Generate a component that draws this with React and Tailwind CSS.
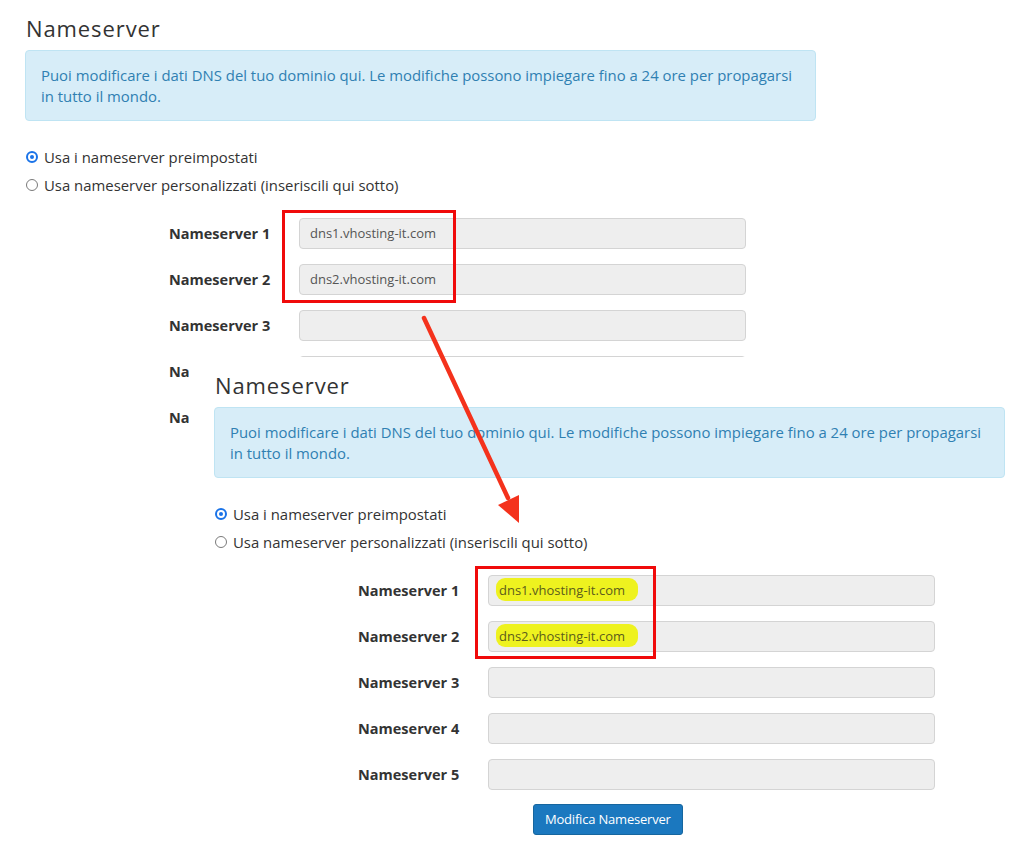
const font = { fontFamily: "'Open Sans', 'Liberation Sans', sans-serif" }

const Radio = ({ checked, children }) => (
    <div className="flex items-center h-[28px] text-[14.9px] text-[#333]">
        {checked ? (
            <span className="w-[12px] h-[12px] rounded-full border-[2px] border-[#1a73e8] flex items-center justify-center ml-[1px]">
                <span className="w-[4px] h-[4px] rounded-full bg-[#1a73e8]"></span>
            </span>
        ) : (
            <span className="w-[12px] h-[12px] rounded-full border border-[#7a7a7a] ml-[1px]"></span>
        )}
        <span className="ml-[6px]">{children}</span>
    </div>
)

const Field = ({ n, value, highlight }) => (
    <div className="flex items-center h-[31px]">
        <label className="ml-[144px] w-[130px] text-[14.5px] font-bold text-[#333]">Nameserver {n}</label>
        <div className="relative w-[447px] h-[31px] rounded-[4px] border border-[#d4d4d4] bg-[#eeeeee] flex items-center pl-[10px] text-[13px] text-[#555]">
            {value && highlight && (
                <span className="absolute left-[7px] top-[2px] w-[142px] h-[23px] rounded-[9px] bg-[#eef21f]"></span>
            )}
            <span className={highlight ? "relative text-[#5c5c1c]" : "relative"}>{value}</span>
        </div>
    </div>
)

const Panel = ({ highlight }) => (
    <div className="pl-[25px] pt-[14px] bg-white" style={font}>
        <h2 className="ml-[1px] text-[22px] leading-[28px] font-normal text-[#333] tracking-[0.9px]">Nameserver</h2>
        <div className="mt-[8px] w-[791px] rounded-[4px] border border-[#bfe4f3] bg-[#d7edf8] px-[15px] pt-[14px] pb-[13px] text-[14.9px] leading-[21px] text-[#2f80b2]">
            Puoi modificare i dati DNS del tuo dominio qui. Le modifiche possono impiegare fino a 24 ore per propagarsi
            <br />
            in tutto il mondo.
        </div>
        <div className="mt-[22px]">
            <Radio checked>Usa i nameserver preimpostati</Radio>
            <Radio>Usa nameserver personalizzati (inseriscili qui sotto)</Radio>
        </div>
        <div className="mt-[19px] flex flex-col gap-[15px]">
            <Field n={1} value="dns1.vhosting-it.com" highlight={highlight} />
            <Field n={2} value="dns2.vhosting-it.com" highlight={highlight} />
            <Field n={3} />
            <Field n={4} />
            <Field n={5} />
        </div>
        <button className="mt-[14px] ml-[319px] h-[31px] px-[11px] rounded-[3px] bg-[#1b78bf] border border-[#16669f] text-[13px] tracking-[-0.2px] text-white">
            Modifica Nameserver
        </button>
    </div>
)

export default function App() {
    return (
        <div className="relative w-[1024px] h-[843px] overflow-hidden bg-white">
            <Panel />
            <div className="absolute left-[196px] top-[357px] w-[828px] h-[486px] bg-white">
                <div className="-ml-[7px]">
                    <Panel highlight />
                </div>
            </div>
            <div className="absolute left-[282px] top-[210px] w-[174px] h-[93px] border-[3px] border-[#f00a0a]"></div>
            <div className="absolute left-[475px] top-[566px] w-[181px] h-[93px] border-[3px] border-[#f00a0a]"></div>
            <svg className="absolute left-0 top-0" width="1024" height="843">
                <line x1="424" y1="318" x2="508" y2="498" stroke="#f4321c" strokeWidth="4.5" strokeLinecap="round" />
                <polygon points="519,523 498,505 519,495" fill="#f4321c" />
            </svg>
        </div>
    )
}
